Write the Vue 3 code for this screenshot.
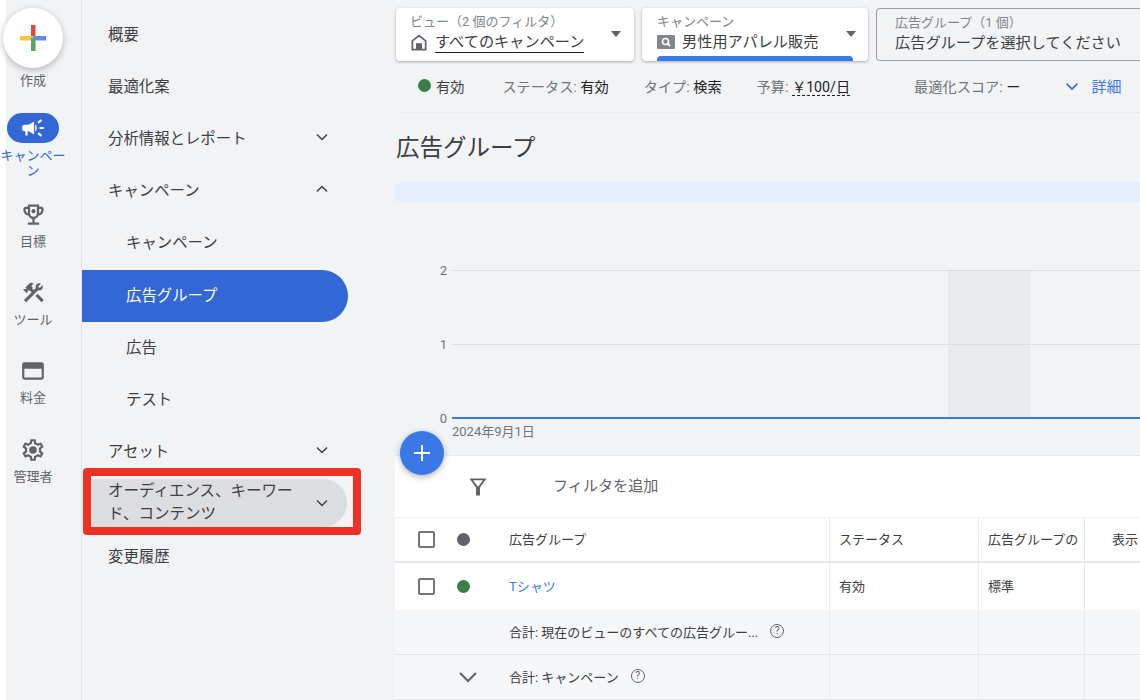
<script setup>
const rail = [
  { key: 'camp', label: 'キャンペーン', active: true },
  { key: 'goal', label: '目標' },
  { key: 'tool', label: 'ツール' },
  { key: 'bill', label: '料金' },
  { key: 'admin', label: '管理者' }
]
const nav = [
  { label: '概要', h: 52 },
  { label: '最適化案', h: 52 },
  { label: '分析情報とレポート', h: 52, chev: 'down' },
  { label: 'キャンペーン', h: 52, chev: 'up' },
  { label: 'キャンペーン', h: 52, sub: true },
  { label: '広告グループ', h: 52.5, mt: 2.5, sub: true, active: true },
  { label: '広告', h: 52, mt: -2.5, sub: true },
  { label: 'テスト', h: 52, sub: true },
  { label: 'アセット', h: 53, chev: 'down' }
]
</script>

<template>
  <div class="page">
    <div class="strip"></div>
    <aside class="rail">
      <div class="create">
        <svg width="30" height="30" viewBox="0 0 30 30">
          <rect x="13" y="2" width="4.500" height="13" fill="#e0493c" />
          <rect x="2" y="13" width="13" height="4.500" fill="#f6c344" />
          <rect x="15" y="13" width="13" height="4.500" fill="#5b8def" />
          <rect x="13" y="15" width="4.500" height="13" fill="#5aa667" />
        </svg>
      </div>
      <div class="create-label">作成</div>
      <div v-for="r in rail" :key="r.key" class="rail-item" :class="[r.key, { on: r.active }]">
        <div class="rail-icon">
          <svg v-if="r.key === 'camp'" width="26" height="26" viewBox="0 0 24 24" fill="#fff">
            <path d="M18 11v2h4v-2h-4zm-2 6.610c.96.71 2.210 1.650 3.200 2.390.4-.53.8-1.070 1.200-1.600-.99-.74-2.240-1.680-3.200-2.400-.4.54-.8 1.080-1.200 1.610zM20.400 5.600c-.4-.53-.8-1.070-1.200-1.600-.99.74-2.240 1.680-3.200 2.400.4.53.8 1.070 1.200 1.600.96-.72 2.210-1.650 3.200-2.400zM4 9c-1.100 0-2 .9-2 2v2c0 1.100.9 2 2 2h1v4h2v-4h1l5 3V6L8 9H4zm11.500 3c0-1.330-.58-2.530-1.500-3.350v6.690c.92-.81 1.500-2.010 1.500-3.340z" />
          </svg>
          <svg v-else-if="r.key === 'goal'" width="27" height="27" viewBox="0 0 24 24" fill="#5f6368">
            <path d="M19 5h-2V3H7v2H5c-1.100 0-2 .9-2 2v1c0 2.550 1.920 4.630 4.390 4.940.63 1.500 1.980 2.630 3.610 2.960V19H7v2h10v-2h-4v-3.100c1.630-.33 2.980-1.460 3.610-2.960C19.080 12.630 21 10.550 21 8V7c0-1.100-.9-2-2-2zM5 8V7h2v3.820C5.840 10.400 5 9.300 5 8zm7 6c-1.650 0-3-1.350-3-3V5h6v6c0 1.650-1.350 3-3 3zm7-6c0 1.300-.84 2.400-2 2.820V7h2v1z" />
            <circle cx="12" cy="9" r="1.800" />
          </svg>
          <svg v-else-if="r.key === 'tool'" width="25" height="25" viewBox="0 0 24 24" fill="#5f6368">
            <path d="M13.780 15.300L19.780 21.300L21.890 19.140L15.890 13.140L13.780 15.300ZM17.500 10.100C17.110 10.100 16.690 10.050 16.360 9.910L4.970 21.250L2.860 19.140L10.270 11.740L8.500 9.960L7.780 10.660L6.330 9.250V12.110L5.630 12.810L2.110 9.250L2.810 8.550H5.620L4.220 7.140L7.780 3.580C8.950 2.410 10.830 2.410 12 3.580L9.890 5.740L11.300 7.140L10.590 7.850L12.380 9.630L14.200 7.750C14.060 7.420 14 7 14 6.630C14 4.660 15.560 3.110 17.500 3.110C18.090 3.110 18.610 3.250 19.080 3.530L16.410 6.200L17.910 7.700L20.580 5.030C20.860 5.500 21 6 21 6.630C21 8.550 19.450 10.100 17.500 10.100Z" />
          </svg>
          <svg v-else-if="r.key === 'bill'" width="26" height="26" viewBox="0 0 24 24" fill="#5f6368">
            <path fill-rule="evenodd" d="M4 4h16a2 2 0 0 1 2 2v12a2 2 0 0 1-2 2H4a2 2 0 0 1-2-2V6a2 2 0 0 1 2-2zm0 6v8h16v-8z" />
          </svg>
          <svg v-else width="26" height="26" viewBox="0 0 24 24" fill="#5f6368">
            <path d="M19.430 12.980c.04-.32.07-.64.07-.98 0-.34-.03-.66-.07-.98l2.110-1.650c.19-.15.24-.42.12-.64l-2-3.460c-.09-.16-.26-.25-.44-.25-.06 0-.12.01-.17.03l-2.490 1c-.52-.4-1.080-.73-1.690-.98l-.38-2.650C14.460 2.180 14.250 2 14 2h-4c-.25 0-.46.18-.49.42l-.38 2.650c-.61.25-1.170.59-1.690.98l-2.490-1c-.06-.02-.12-.03-.18-.03-.17 0-.34.09-.43.25l-2 3.460c-.13.22-.07.49.12.64l2.110 1.650c-.04.32-.07.65-.07.98 0 .33.03.66.07.98l-2.110 1.650c-.19.15-.24.42-.12.64l2 3.460c.09.16.26.25.44.25.06 0 .12-.01.17-.03l2.490-1c.52.4 1.080.73 1.690.98l.38 2.650c.03.24.24.42.49.42h4c.25 0 .46-.18.49-.42l.38-2.650c.61-.25 1.170-.59 1.690-.98l2.490 1c.06.02.12.03.18.03.17 0 .34-.09.43-.25l2-3.460c.12-.22.07-.49-.12-.64l-2.110-1.650zm-1.980-1.710c.04.31.05.52.05.73 0 .21-.02.43-.05.73l-.14 1.130.89.7 1.080.84-.7 1.210-1.270-.51-1.040-.42-.9.68c-.43.32-.84.56-1.250.73l-1.060.43-.16 1.130-.2 1.350h-1.400l-.19-1.350-.16-1.130-1.060-.43c-.43-.18-.83-.41-1.230-.71l-.91-.7-1.060.43-1.270.51-.7-1.210 1.080-.84.89-.7-.14-1.130c-.03-.31-.05-.54-.05-.74s.02-.43.05-.73l.14-1.130-.89-.7-1.080-.84.7-1.210 1.270.51 1.040.42.9-.68c.43-.32.84-.56 1.250-.73l1.060-.43.16-1.130.2-1.350h1.390l.19 1.350.16 1.130 1.060.43c.43.18.83.41 1.230.71l.91.7 1.060-.43 1.270-.51.7 1.210-1.070.85-.89.7.14 1.130z" />
            <circle cx="12" cy="12" r="3.500" />
          </svg>
        </div>
        <div class="rail-label">{{ r.label }}</div>
      </div>
    </aside>

    <nav class="nav">
      <div
        v-for="(n, i) in nav"
        :key="i"
        class="nav-item"
        :class="{ sub: n.sub, active: n.active }"
        :style="{ height: n.h + 'px', marginTop: (n.mt || 0) + 'px' }"
      >
        <span class="nav-text">{{ n.label }}</span>
        <svg v-if="n.chev" class="chev" :class="{ up: n.chev === 'up' }" width="14" height="14" viewBox="0 0 14 14">
          <path d="M2 4.500 7 9.500 12 4.500" fill="none" stroke="#3c4043" stroke-width="1.500" />
        </svg>
      </div>
      <div class="highlight">
        <div class="nav-item hovered">
          <span class="nav-text">オーディエンス、キーワード、コンテンツ</span>
          <svg class="chev" width="14" height="14" viewBox="0 0 14 14">
            <path d="M2 4.500 7 9.500 12 4.500" fill="none" stroke="#3c4043" stroke-width="1.500" />
          </svg>
        </div>
      </div>
      <div class="nav-item last"><span class="nav-text">変更履歴</span></div>
    </nav>

    <main class="main">
      <div class="cards">
        <div class="card first">
          <div class="card-body">
            <div class="card-label">ビュー（2 個のフィルタ）</div>
            <div class="card-value">
              <svg width="18" height="19" viewBox="0 0 18 19" fill="#5f6368">
                <path fill-rule="evenodd" d="M9 1.500 16.500 7.500v10h-15v-10zM3.200 8.300v7.500h2.800v-5.500h6v5.500h2.800V8.300L9 3.800z" />
              </svg>
              <span class="underlined">すべてのキャンペーン</span>
            </div>
          </div>
          <span class="caret"></span>
        </div>
        <div class="card second">
          <div class="card-body">
            <div class="card-label">キャンペーン</div>
            <div class="card-value">
              <svg width="18" height="14" viewBox="0 0 18 14">
                <rect width="18" height="14" rx="1" fill="#80868b" />
                <circle cx="8.500" cy="6.500" r="3" fill="none" stroke="#fff" stroke-width="1.600" />
                <path d="M10.700 8.700 13 11" stroke="#fff" stroke-width="1.800" />
              </svg>
              <span>男性用アパレル販売</span>
            </div>
          </div>
          <span class="caret"></span>
          <div class="progress"></div>
        </div>
        <div class="card third">
          <div class="card-label">広告グループ（1 個）</div>
          <div class="third-value">広告グループを選択してください</div>
        </div>
      </div>

      <div class="status">
        <span class="dot green"></span><span class="dark s-first">有効</span>
        <span class="s-a">ステータス: <b>有効</b></span>
        <span class="s-b">タイプ: <b>検索</b></span>
        <span class="s-c">予算: <b class="budget">￥100/日</b></span>
        <span class="s-d">最適化スコア: <b>ー</b></span>
        <span class="detail">
          <svg width="14" height="14" viewBox="0 0 14 14">
            <path d="M1.500 4.500 7 10 12.500 4.500" fill="none" stroke="#3367d6" stroke-width="1.700" />
          </svg>
          詳細
        </span>
      </div>

      <h1 class="title">広告グループ</h1>
      <div class="band"></div>

      <div class="chart">
        <svg class="chart-svg" width="745" height="253" viewBox="0 0 745 253">
          <rect x="553" y="68" width="82" height="148" fill="#e8eaed" />
          <path d="M57 68.500H745M57 142.500H745M57 216.500H745" stroke="#dcdee1" stroke-width="1" />
          <path d="M57 216H745" stroke="#3b78e7" stroke-width="2" />
          <text x="52" y="73" text-anchor="end" class="tick">2</text>
          <text x="52" y="147" text-anchor="end" class="tick">1</text>
          <text x="52" y="221" text-anchor="end" class="tick">0</text>
          <text x="57" y="234" class="tick">2024年9月1日</text>
        </svg>
        <div class="fab">
          <svg width="22" height="22" viewBox="0 0 22 22">
            <path d="M11 3v16M3 11h16" stroke="#fff" stroke-width="2" />
          </svg>
        </div>
      </div>

      <section class="table">
        <div class="filter">
          <svg class="filter-icon" width="20" height="20" viewBox="0 0 20 20">
            <path fill-rule="evenodd" d="M1.500 1.500h17L12 10.500V18.500H8v-8zM5 3.300 10 9.800 15 3.300z" fill="#5f6368" />
          </svg>
          <span class="filter-text">フィルタを追加</span>
        </div>
        <div class="row head">
          <div class="c-check"><span class="box"></span></div>
          <div class="c-dot"><span class="dot gray"></span></div>
          <div class="c-name">広告グループ</div>
          <div class="c-status">ステータス</div>
          <div class="c-type">広告グループの</div>
          <div class="c-view">表示</div>
        </div>
        <div class="row body">
          <div class="c-check"><span class="box"></span></div>
          <div class="c-dot"><span class="dot green"></span></div>
          <div class="c-name link">Tシャツ</div>
          <div class="c-status">有効</div>
          <div class="c-type">標準</div>
          <div class="c-view"></div>
        </div>
        <div class="row total">
          <div class="c-check"></div>
          <div class="c-dot"></div>
          <div class="c-name">
            合計: 現在のビューのすべての広告グルー...
            <span class="help">?</span>
          </div>
          <div class="c-status"></div>
          <div class="c-type"></div>
          <div class="c-view"></div>
        </div>
        <div class="row total">
          <div class="c-check"></div>
          <div class="c-dot">
            <svg class="total-chev" width="20" height="12" viewBox="0 0 20 12">
              <path d="M2 2 10 10 18 2" fill="none" stroke="#5f6368" stroke-width="2" />
            </svg>
          </div>
          <div class="c-name">
            合計: キャンペーン
            <span class="help">?</span>
          </div>
          <div class="c-status"></div>
          <div class="c-type"></div>
          <div class="c-view"></div>
        </div>
      </section>
    </main>
  </div>
</template>

<style>
html, body { margin: 0; padding: 0; background: #fff; overflow: hidden; }
</style>

<style scoped>
.page {
  display: flex;
  width: 1140px;
  height: 700px;
  overflow: hidden;
  background: #fff;
  font-family: "Roboto", "Noto Sans CJK JP", sans-serif;
  color: #3c4043;
}
.strip { width: 6px; flex: none; background: #fff; }
.rail {
  position: relative;
  width: 54px;
  padding: 8px 21px 0 0;
  flex: none;
  background: #f1f3f5;
  border-right: 1px solid #e3e5e8;
  display: flex;
  flex-direction: column;
  align-items: center;
  box-sizing: content-box;
  z-index: 1;
}
.create {
  width: 60px;
  height: 60px;
  border-radius: 50%;
  background: #fff;
  box-shadow: 0 2px 6px rgba(60, 64, 67, .35);
  display: flex;
  align-items: center;
  justify-content: center;
  flex: none;
}
.create-label { font-size: 13px; color: #5f6368; line-height: 16px; margin-top: 5px; }
.rail-item {
  width: 75px;
  display: flex;
  flex-direction: column;
  align-items: center;
  flex: none;
  height: 78.500px;
}
.rail-item.camp { margin-top: 24px; height: 90px; }
.rail-item.goal { margin-top: -5px; }
.rail-icon { height: 32px; width: 52px; display: flex; align-items: center; justify-content: center; flex: none; }
.rail-item.on .rail-icon { background: #3367d6; border-radius: 16px; height: 30px; }
.rail-label { font-size: 13px; line-height: 16px; color: #5f6368; text-align: center; margin-top: 3px; width: 66px; }
.rail-item.goal .rail-label { margin-top: 4px; }
.rail-item.on .rail-label { color: #3367d6; line-height: 15px; margin-top: 5px; word-break: break-all; }

.nav { width: 300px; flex: none; background: #f1f3f5; padding-top: 7px; box-sizing: border-box; }
.nav-item {
  display: flex;
  align-items: center;
  box-sizing: border-box;
  padding: 0 19px 0 26px;
  width: 266px;
  font-size: 15.400px;
  color: #3c4043;
  justify-content: space-between;
}
.nav-item.sub { padding-left: 44px; }
.nav-item.active {
  background: #3367d6;
  color: #fff;
  border-radius: 0 27px 27px 0;
  padding-bottom: 3px;
}
.highlight {
  margin: -9px 0 0 1px;
  width: 278px;
  height: 67px;
  box-sizing: border-box;
  border: 8px solid #ee3124;
  border-radius: 4px;
  background: #f1f3f5;
}
.nav-item.hovered {
  width: 256px;
  height: 48px;
  padding: 1px 18px 0 17px;
  margin-top: 3px;
  background: #dcdde0;
  border-radius: 0 24px 24px 0;
  line-height: 23px;
  font-size: 15.500px;
}
.nav-item.hovered .nav-text { width: 190px; }
.nav-item.last { height: 41px; }
.nav-text { display: block; }
.chev.up { transform: rotate(180deg); }

.main {
  width: 758px;
  flex: none;
  background: #f1f3f5;
  padding: 8px 0 0 13px;
  box-sizing: border-box;
}
.cards { display: flex; gap: 8px; height: 53px; margin-left: 1px; }
.card {
  position: relative;
  background: #fff;
  border-radius: 4px;
  box-shadow: 0 1px 3px rgba(60, 64, 67, .4);
  height: 53px;
  box-sizing: border-box;
  display: flex;
  overflow: hidden;
  flex: none;
}
.card.first { width: 238px; padding: 6px 0 0 14px; }
.card.second { width: 226px; padding: 6px 0 0 15px; }
.card.third {
  width: 290px;
  background: transparent;
  box-shadow: none;
  border: 1px solid #9aa0a6;
  display: block;
  padding: 6px 0 0 18px;
  border-radius: 4px 0 0 4px;
  border-right: none;
}
.card-body { flex: 1; }
.card-label { font-size: 13px; line-height: 16px; color: #80868b; }
.card-value { display: flex; align-items: center; gap: 7px; font-size: 15.200px; line-height: 20px; color: #3c4043; margin-top: 2px; }
.underlined { border-bottom: 1px solid #202124; line-height: 20px; }
.third-value { font-size: 15.200px; color: #3c4043; line-height: 20px; margin-top: 2px; }
.caret {
  position: absolute;
  right: 13px;
  top: 23px;
  width: 0;
  height: 0;
  border-left: 5px solid transparent;
  border-right: 5px solid transparent;
  border-top: 6px solid #5f6368;
}
.card.second .caret { right: 12px; }
.progress {
  position: absolute;
  left: 15px;
  bottom: 0;
  width: 196px;
  height: 5px;
  background: #3b78e7;
  border-radius: 4px 4px 0 0;
}

.status {
  height: 52px;
  padding-bottom: 2px;
  border-bottom: 1px solid #ebedef;
  display: flex;
  align-items: center;
  font-size: 14.200px;
  color: #70757a;
  box-sizing: border-box;
  width: 745px;
}
.status b { font-weight: 400; color: #202124; }
.dot { display: inline-block; width: 13px; height: 13px; border-radius: 50%; flex: none; }
.dot.green { background: #388046; }
.dot.gray { background: #5f6368; }
.status .dot { margin-left: 23px; }
.dark { color: #3c4043; }
.s-first { margin-left: 5px; }
.s-a { margin-left: 38px; }
.s-b { margin-left: 35px; }
.s-c { margin-left: 35px; }
.budget { border-bottom: 1px dashed #202124; }
.s-d { margin-left: 64px; }
.detail { display: flex; align-items: center; gap: 12px; margin-left: 45px; color: #3b78e7; font-size: 15px; }

.title { font-size: 23.500px; font-weight: 400; color: #3c4043; line-height: 32px; margin: 19px 0 0 1px; }
.band { height: 19px; width: 745px; margin-top: 19px; background: #e7effc; }

.chart { position: relative; height: 253px; }
.chart-svg { display: block; }
.tick { font-size: 13px; fill: #70757a; font-family: "Roboto", "Noto Sans CJK JP", sans-serif; }
.fab {
  position: absolute;
  left: 5px;
  top: 229px;
  width: 44px;
  height: 44px;
  border-radius: 50%;
  background: #3b78e7;
  box-shadow: 0 2px 6px rgba(60, 64, 67, .4);
  display: flex;
  align-items: center;
  justify-content: center;
  z-index: 2;
}

.table { width: 745px; background: #fff; border-top: 1px solid #e8eaed; height: 300px; box-sizing: border-box; }
.filter {
  height: 61px;
  display: flex;
  align-items: center;
  font-size: 15.100px;
  color: #5f6368;
  border-bottom: 1px solid #eef0f1;
}
.filter-icon { margin-left: 73px; margin-right: 65px; }
.filter-text { margin-bottom: 5px; }
.row { display: flex; font-size: 13px; color: #3c4043; box-sizing: border-box; }
.row > div { display: flex; align-items: center; box-sizing: border-box; height: 100%; }
.row.head { height: 45px; border-bottom: 2px solid #e3e5ea; }
.row.head .c-name, .row.head .c-status, .row.head .c-type, .row.head .c-view { padding-bottom: 3px; }
.row.body { height: 47px; }
.row.body .c-name, .row.body .c-status, .row.body .c-type { padding-bottom: 2px; }
.row.total { height: 45px; background: #f6f7f9; border-bottom: 1px solid #e3e5e8; }
.row.total .c-name { padding-bottom: 2px; }
.c-check { width: 49px; padding-left: 23px; flex: none; }
.c-dot { width: 65px; padding-left: 13px; flex: none; }
.c-name { width: 320px; flex: none; }
.c-status, .c-type, .c-view { border-left: 1px solid #e8eaed; flex: none; padding-left: 9px; }
.c-status { width: 149px; }
.c-type { width: 106px; }
.c-view { flex: 1; padding-left: 27px; }
.box { width: 13px; height: 13px; border: 2px solid #757575; border-radius: 2px; display: block; }
.link { color: #3b78e7; }
.total-chev { margin-left: 1px; }
.help {
  display: inline-flex;
  width: 14px;
  height: 14px;
  box-sizing: border-box;
  border: 1.500px solid #5f6368;
  border-radius: 50%;
  margin-left: 12px;
  align-items: center;
  justify-content: center;
  font-size: 10.500px;
  line-height: 1;
  color: #5f6368;
}
</style>
